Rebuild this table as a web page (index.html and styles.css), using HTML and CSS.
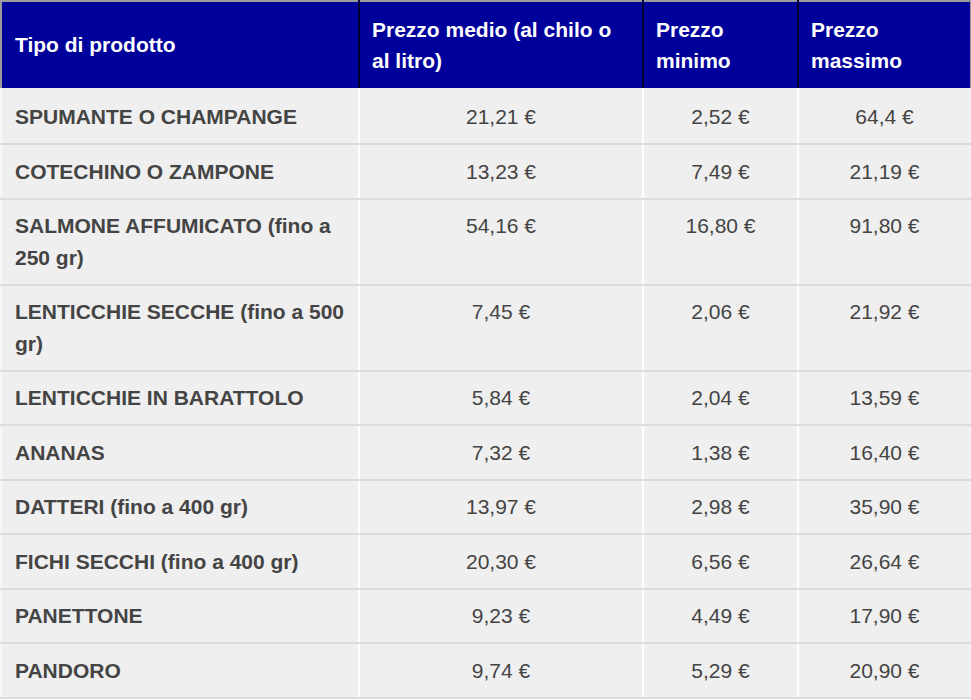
FILE: index.html
```html
<!DOCTYPE html>
<html lang="it">
<head>
<meta charset="utf-8">
<title>Prezzi prodotti</title>
<link rel="stylesheet" href="styles.css">
</head>
<body>
<table class="prices">
  <colgroup>
    <col class="c1"><col class="c2"><col class="c3"><col class="c4">
  </colgroup>
  <thead>
    <tr>
      <th>Tipo di prodotto</th>
      <th>Prezzo medio (al chilo o<br>al litro)</th>
      <th>Prezzo<br>minimo</th>
      <th>Prezzo<br>massimo</th>
    </tr>
  </thead>
  <tbody>
    <tr><td>SPUMANTE O CHAMPANGE</td><td>21,21 €</td><td>2,52 €</td><td>64,4 €</td></tr>
    <tr><td>COTECHINO O ZAMPONE</td><td>13,23 €</td><td>7,49 €</td><td>21,19 €</td></tr>
    <tr><td>SALMONE AFFUMICATO (fino a<br>250 gr)</td><td>54,16 €</td><td>16,80 €</td><td>91,80 €</td></tr>
    <tr><td>LENTICCHIE SECCHE (fino a 500<br>gr)</td><td>7,45 €</td><td>2,06 €</td><td>21,92 €</td></tr>
    <tr><td>LENTICCHIE IN BARATTOLO</td><td>5,84 €</td><td>2,04 €</td><td>13,59 €</td></tr>
    <tr><td>ANANAS</td><td>7,32 €</td><td>1,38 €</td><td>16,40 €</td></tr>
    <tr><td>DATTERI (fino a 400 gr)</td><td>13,97 €</td><td>2,98 €</td><td>35,90 €</td></tr>
    <tr><td>FICHI SECCHI (fino a 400 gr)</td><td>20,30 €</td><td>6,56 €</td><td>26,64 €</td></tr>
    <tr><td>PANETTONE</td><td>9,23 €</td><td>4,49 €</td><td>17,90 €</td></tr>
    <tr><td>PANDORO</td><td>9,74 €</td><td>5,29 €</td><td>20,90 €</td></tr>
  </tbody>
</table>
</body>
</html>
```
FILE: styles.css
```css
html, body {
  margin: 0;
  padding: 0;
  background: #ffffff;
}

body {
  font-family: "Liberation Sans", Arial, sans-serif;
  font-size: 21px;
  line-height: 31.5px;
}

.prices {
  width: 970px;
  table-layout: fixed;
  border-collapse: collapse;
}

.c1 { width: 358px; }
.c2 { width: 284px; }
.c3 { width: 155px; }
.c4 { width: 173px; }

.prices th {
  background: #00009a;
  color: #ffffff;
  font-weight: bold;
  text-align: left;
  vertical-align: middle;
  padding: 11.5px 4px 11.5px 12px;
  border-top: 2px solid #9a9a9a;
  border-bottom: 0;
  border-left: 2px solid #00002e;
  border-right: 2px solid #00002e;
  white-space: nowrap;
}

.prices th:first-child {
  border-left-color: #9a9a9a;
  padding-left: 13px;
}

.prices th:last-child {
  border-right-color: #9a9a9a;
}

.prices td {
  background: #efefef;
  color: #444444;
  vertical-align: top;
  text-align: center;
  padding: 10.5px 6px;
  border-bottom: 2px solid #dcdcdc;
  border-left: 2px solid #ffffff;
  border-right: 2px solid #ffffff;
  white-space: nowrap;
}

.prices td:first-child {
  text-align: left;
  font-weight: bold;
  padding-left: 13px;
  padding-right: 4px;
  border-left-color: #f8f8f8;
}

.prices td:last-child {
  border-right-color: #f8f8f8;
}

.prices tbody tr:first-child td {
  padding-top: 13px;
}
```
